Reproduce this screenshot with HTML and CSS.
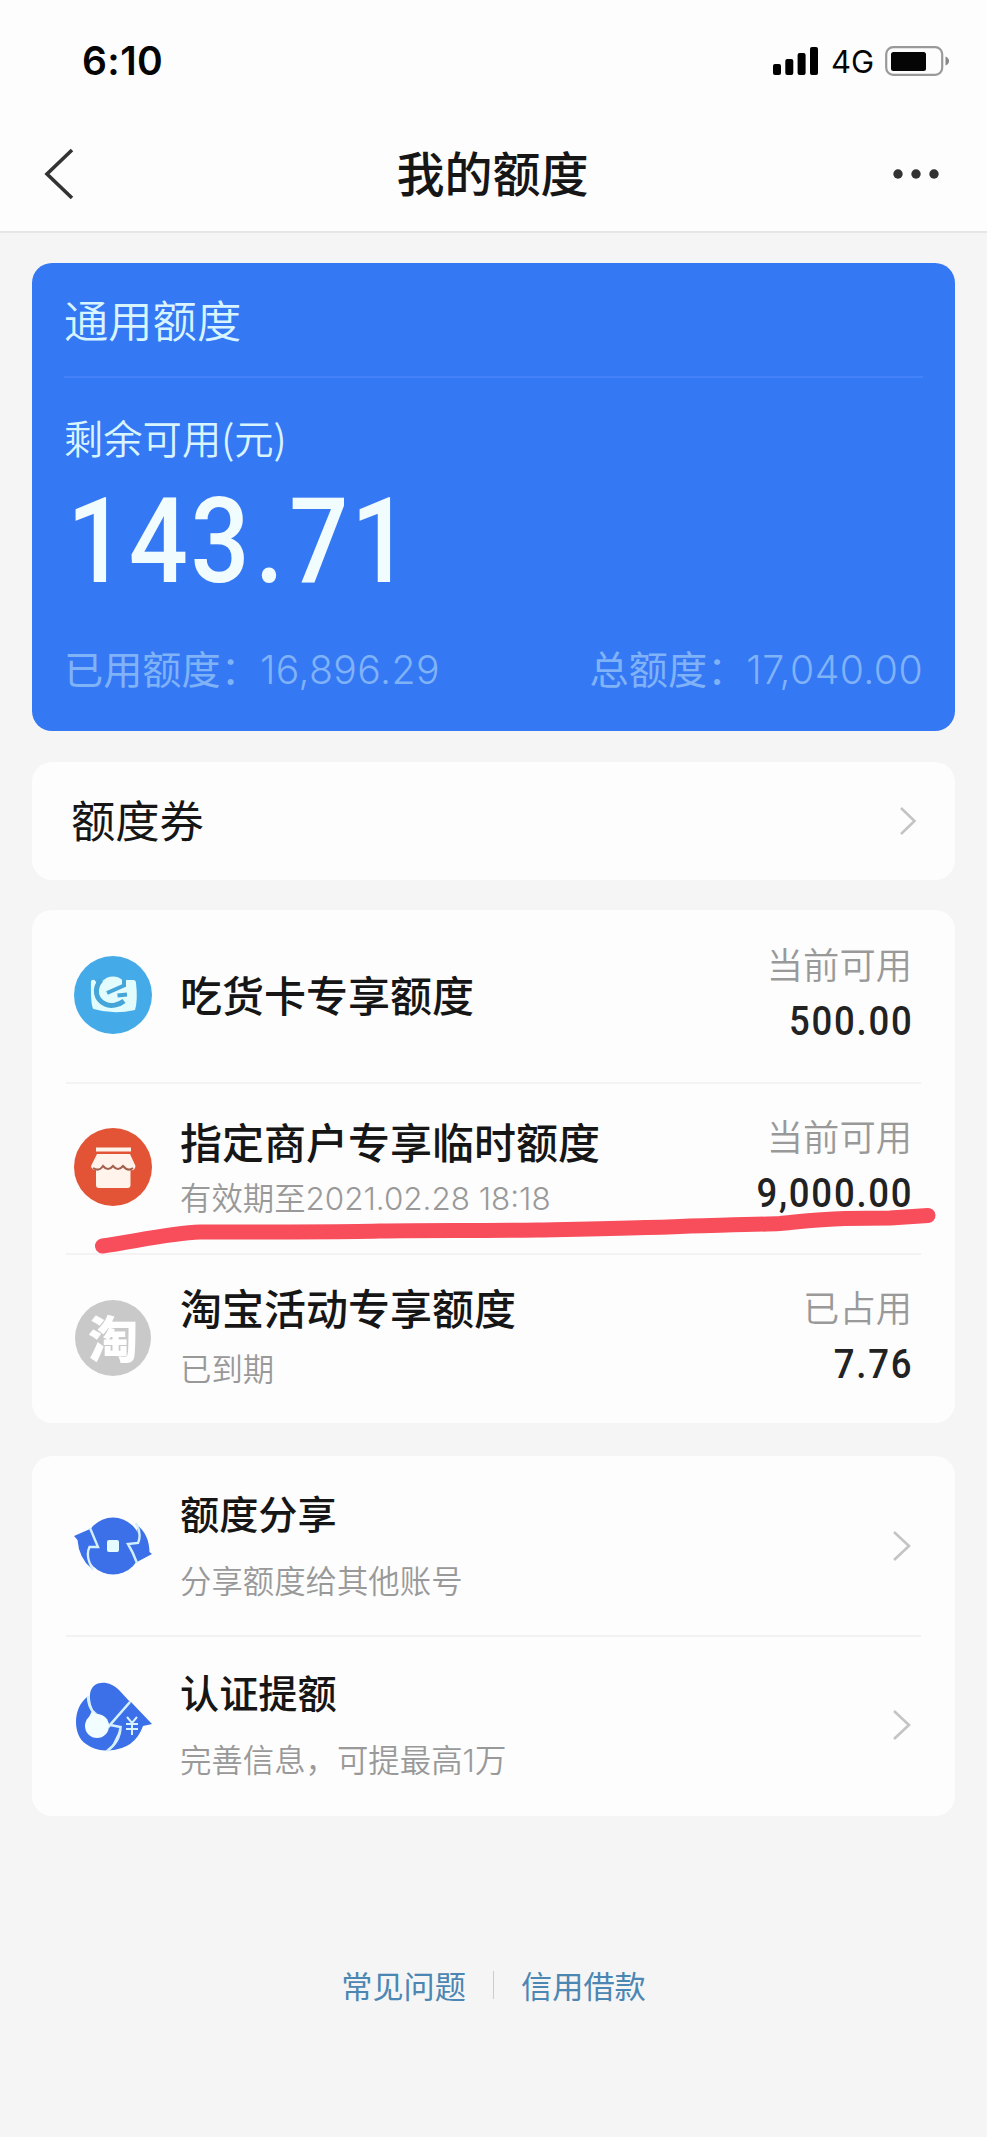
FILE: index.html
```html
<!DOCTYPE html>
<html lang="zh-CN">
<head>
<meta charset="utf-8">
<title>我的额度</title>
<link rel="stylesheet" href="styles.css">
</head>
<body>
<header class="header">
  <div class="status">
    <span class="time">6:10</span>
    <div class="status-right">
      <svg class="signal" width="46" height="30" viewBox="0 0 46 30"><rect x="0" y="18" width="8" height="11" rx="2"/><rect x="12.3" y="13" width="8" height="16" rx="2"/><rect x="24.6" y="7" width="8" height="22" rx="2"/><rect x="37" y="1" width="8" height="28" rx="2"/></svg>
      <span class="network">4G</span>
      <svg class="battery" width="66" height="30" viewBox="0 0 66 30"><rect x="1.2" y="1.2" width="56" height="27.6" rx="7" fill="none" stroke="#999" stroke-width="2.2"/><rect x="6" y="6" width="35" height="19" rx="2.5" fill="#050505"/><path d="M60.5 10.5Q64 12 64 15T60.5 19.5Z" fill="#888"/></svg>
    </div>
  </div>
  <nav class="nav">
    <svg class="back" width="32" height="54" viewBox="0 0 32 54"><path d="M29 3L4 27L29 51" fill="none" stroke="#333" stroke-width="3.6"/></svg>
    <h1 class="title">我的额度</h1>
    <svg class="more" width="46" height="12" viewBox="0 0 46 12" fill="#333"><circle cx="5" cy="6" r="4.7"/><circle cx="23" cy="6" r="4.7"/><circle cx="41" cy="6" r="4.7"/></svg>
  </nav>
</header>

<main class="main">
  <section class="quota">
    <h2 class="quota-title">通用额度</h2>
    <p class="quota-label">剩余可用(元)</p>
    <p class="quota-amount">143<span class="dot">.</span>71</p>
    <div class="quota-foot">
      <p>已用额度：<span class="num">16,896.29</span></p>
      <p>总额度：<span class="num">17,040.00</span></p>
    </div>
  </section>

  <section class="card coupon">
    <span>额度券</span>
    <svg width="18" height="30" viewBox="0 0 18 30"><path class="chev" d="M2 2L15.500 15L2 28"/></svg>
  </section>

  <section class="card list">
    <div class="row first">
      <svg class="icon" width="78" height="78" viewBox="0 0 78 78"><circle cx="39" cy="39" r="39" fill="#45abe8"/><path d="M17 25Q20 22 22 26L24 30L33 24H59Q62 24 62 27Q64 44 61 54Q39 59 19.500 53Q16.500 50 17 25Z" fill="#e2fbfd"/><circle cx="39" cy="35" r="14.500" fill="#e2fbfd"/><path d="M27 24C19 33 22 44 31 48C37 51 45 49 50 45" fill="none" stroke="#45a5d8" stroke-width="5"/><path d="M33 37L50 29.500M43.500 39.500L53 38.500M50 24V31" fill="none" stroke="#45a5d8" stroke-width="4"/></svg>
      <div class="info"><h3>吃货卡专享额度</h3></div>
      <div class="value"><span class="tag">当前可用</span><span class="amount">500.00</span></div>
    </div>
    <div class="row second">
      <svg class="icon" width="78" height="78" viewBox="0 0 78 78"><circle cx="39" cy="39" r="39" fill="#e25435"/><path d="M22 19.500H57V23.500H22Z" fill="#fff3ec"/><path d="M23 26H56L61.500 38Q61 43 56.500 42V57Q56.500 60 53.500 60H25Q22 60 22 57V42Q17.500 42 17 38Z" fill="#fff3ec"/><path d="M19 40Q25 44 29 38Q34 44 39 38Q44 44 49 38Q54 44 59 40" fill="none" stroke="#a4604e" stroke-width="2"/></svg>
      <div class="info"><h3>指定商户专享临时额度</h3><p>有效期至<span class="date">2021.02.28 18:18</span></p></div>
      <div class="value"><span class="tag">当前可用</span><span class="amount">9,000.00</span></div>
      <svg class="marker" width="852" height="60" viewBox="0 0 852 60"><path d="M12.500 42C42 38 80 29 110 28C180 28 260 28 290 27C340 26 390 27 448 26C500 25 560 24 600 22C640 21 670 20.500 690 19.500C715 17 730 15 755 14.500L800 14L838 11.500" fill="none" stroke="#f84d5b" stroke-width="15" stroke-linecap="round" stroke-linejoin="round"/></svg>
    </div>
    <div class="row third">
      <div class="icon taobao"><span>淘</span></div>
      <div class="info"><h3>淘宝活动专享额度</h3><p>已到期</p></div>
      <div class="value"><span class="tag">已占用</span><span class="amount">7.76</span></div>
    </div>
  </section>

  <section class="card links">
    <div class="row first-link">
      <svg class="icon" width="78" height="60" viewBox="0 0 78 60"><g fill="#3b70e8"><ellipse cx="39" cy="30" rx="28" ry="28.500"/><path d="M0 20L16 13L24 31H15L17 52Q5 42 3.500 24Z"/><path d="M63 9Q75 18 75.500 36L78 38L63 46L54 28L64 27Z"/></g><path d="M16 12L24 31H15.500Q11 40 19 54M62 7Q68 18 64 27L54 28Q59 36 63 47" fill="none" stroke="#d3f0fc" stroke-width="2.400"/><rect x="33" y="24" width="12" height="12" rx="2" fill="#e4fbff"/></svg>
      <div class="info"><h3>额度分享</h3><p>分享额度给其他账号</p></div>
      <svg class="arrow" width="20" height="32" viewBox="0 0 20 32"><path class="chev" d="M2 2L17 16L2 30"/></svg>
    </div>
    <div class="row last-link">
      <svg class="icon" width="78" height="70" viewBox="0 0 78 70"><g fill="#3b70e8"><path d="M16 17C14 -3 35-3 45 8L57 21L36 42L19 28Q16 22 16 17Z"/><path d="M13 15C-2 27-1 54 12 62Q23 70 36 68L47 45L37 42L19 29Q14 22 13 15Z"/><path d="M57 20L78 42L69 44Q61 67 35 68.500Q46 60 46 45L37 42Z"/></g><path d="M14 14Q14 24 20 31L36 45M56 20L36 43L46.500 45Q46 60 33 69" fill="none" stroke="#d3f0fc" stroke-width="2.600"/><circle cx="23" cy="44" r="12" fill="#f2fdff"/><path d="M18 29L14 37L30 40Z" fill="#f2fdff"/><path d="M53 35L58 41L63 35M58 41V53M52 42H64M52 47H64" fill="none" stroke="#d9f2ff" stroke-width="2"/></svg>
      <div class="info"><h3>认证提额</h3><p>完善信息，可提最高<span class="date">1</span>万</p></div>
      <svg class="arrow" width="20" height="32" viewBox="0 0 20 32"><path class="chev" d="M2 2L17 16L2 30"/></svg>
    </div>
  </section>
</main>

<footer class="footer"><a>常见问题</a><i class="sep"></i><a>信用借款</a></footer>
</body>
</html>
```

FILE: styles.css
```css
* { box-sizing: border-box; }
body, h1, h2, h3, p { margin: 0; font-weight: 400; }
body {
  min-height: 2137px;
  background: #f5f5f5;
  color: #161616;
  font-family: "Noto Sans CJK SC", sans-serif;
}
svg { display: block; flex: none; }
.header {
  height: 233px;
  background: #fdfdfd;
  border-bottom: 2px solid #e6e6e6;
}
.status {
  display: flex;
  justify-content: space-between;
  align-items: center;
  height: 121px;
  padding: 0 36px 0 82px;
  color: #050505;
}
.time {
  font: 600 39px/48px Inter, sans-serif;
  letter-spacing: .4px;
}
.status-right { display: flex; align-items: center; }
.network {
  width: 66px;
  padding: 2px 0 0 12px;
  font: 400 31px/40px Inter, sans-serif;
}
.nav {
  display: flex;
  justify-content: space-between;
  align-items: center;
  height: 106px;
  padding: 0 48px 0 43px;
}
.title {
  margin-left: 17px;
  padding-bottom: 7px;
  font-size: 48px;
  line-height: 70px;
  font-weight: 500;
}
.main {
  display: flex;
  flex-direction: column;
  gap: 30px;
  padding: 30px 32px 0;
}
.quota {
  height: 468px;
  padding: 0 32px;
  border-radius: 20px;
  background: #3578f4;
  color: #d8f4ff;
}
.quota-title {
  height: 115px;
  padding-top: 23px;
  border-bottom: 2px solid #4382f8;
  font-size: 44.300px;
  line-height: 66px;
  font-weight: 350;
}
.quota-label {
  padding-top: 31px;
  font-size: 39.300px;
  line-height: 56px;
  font-weight: 350;
}
.quota-amount {
  height: 120px;
  margin: 17px 0 0 3px;
  color: #f1fcff;
  font: 500 119px/119px Roboto, sans-serif;
  letter-spacing: 3px;
  transform: scaleX(.875);
  transform-origin: 0 50%;
}
.dot { margin: 0 3px; }
.quota-foot {
  display: flex;
  justify-content: space-between;
  margin-top: 37px;
  color: #80b2f7;
  font-size: 39.200px;
  line-height: 56px;
  font-weight: 350;
}
.num {
  font-family: Inter, sans-serif;
  font-weight: 300;
  letter-spacing: .4px;
}
.card {
  border-radius: 20px;
  background: #fdfdfd;
}
.coupon {
  display: flex;
  justify-content: space-between;
  align-items: center;
  height: 118px;
  margin-top: 1px;
  padding: 0 38px 0 39px;
  font-size: 44.300px;
}
.coupon span { padding-bottom: 5px; }
.chev { fill: none; stroke: #c4c4c4; stroke-width: 2.600; }
.list { height: 513px; }
.row {
  position: relative;
  display: flex;
  align-items: center;
  gap: 28px;
  height: 171px;
  margin: 0 34px;
  padding: 0 9px 4px 8px;
}
.row.first { height: 172px; padding-bottom: 2px; }
.row + .row { border-top: 2px solid #f3f3f3; }
.info { flex: 1; }
.info h3 {
  font-size: 42px;
  line-height: 56px;
  font-weight: 500;
}
.first .info { padding-bottom: 3px; }
.info p {
  color: #999;
  font-size: 31.400px;
  line-height: 56px;
  font-weight: 350;
}
.date { font-family: Inter, sans-serif; font-weight: 300; }
.second .info { padding-top: 6px; }
.third .info h3 { line-height: 60px; }
.third .info p { line-height: 62px; }
.value {
  display: flex;
  flex-direction: column;
  align-items: flex-end;
  padding-bottom: 6px;
}
.tag {
  color: #999;
  font-size: 36.300px;
  line-height: 56px;
  padding-bottom: 1px;
  font-weight: 350;
}
.amount {
  margin-right: -1px;
  color: #222;
  font: 500 41.500px/57px Roboto, sans-serif;
  letter-spacing: 2px;
  transform: scaleX(.88);
  transform-origin: 100% 50%;
}
.marker {
  position: absolute;
  left: 24px;
  top: 120px;
  z-index: 1;
}
.taobao {
  display: flex;
  flex: none;
  justify-content: center;
  align-items: center;
  width: 76px;
  height: 76px;
  margin: 0 1px;
  border-radius: 50%;
  background: #c9c9c9;
  color: #fff;
  font-size: 50px;
  line-height: 60px;
  font-weight: 900;
}
.taobao span { padding-bottom: 4px; }
.links { margin-top: 3px; }
.links .first-link { height: 179px; padding-bottom: 0; }
.links .last-link { height: 181px; }
.links .info h3 { font-size: 39.200px; line-height: 67px; }
.links .info p { line-height: 67px; }
.last-link .info { padding-top: 4px; }
.last-link .icon { margin-bottom: 16px; }
.footer {
  display: flex;
  justify-content: center;
  align-items: center;
  gap: 27px;
  margin-top: 146px;
  color: #4c86b3;
  font-size: 31.200px;
  line-height: 46px;
}
.sep { width: 1px; height: 28px; background: #ccc; }
```
